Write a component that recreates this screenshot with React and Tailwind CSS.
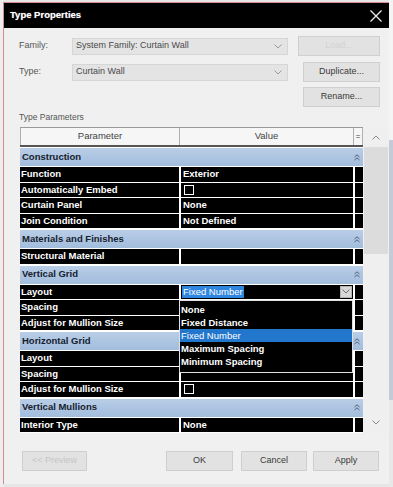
import React from 'react';

const groups = [
  {
    name: 'Construction',
    rows: [
      ['Function', 'Exterior'],
      ['Automatically Embed', 'check'],
      ['Curtain Panel', 'None'],
      ['Join Condition', 'Not Defined'],
    ],
  },
  { name: 'Materials and Finishes', rows: [['Structural Material', '']] },
  {
    name: 'Vertical Grid',
    rows: [
      ['Layout', 'dropdown'],
      ['Spacing', ''],
      ['Adjust for Mullion Size', 'check'],
    ],
  },
  {
    name: 'Horizontal Grid',
    rows: [
      ['Layout', ''],
      ['Spacing', ''],
      ['Adjust for Mullion Size', 'check'],
    ],
  },
  { name: 'Vertical Mullions', rows: [['Interior Type', 'None']] },
];

const layoutOptions = ['None', 'Fixed Distance', 'Fixed Number', 'Maximum Spacing', 'Minimum Spacing'];

function Chevron({ className = '' }) {
  return (
    <svg width="8" height="5" viewBox="0 0 8 5" className={className}>
      <path d="M0.5 0.5 L4 4 L7.5 0.5" fill="none" stroke="currentColor" strokeWidth="1" />
    </svg>
  );
}

function Collapse() {
  return (
    <svg width="6" height="7" viewBox="0 0 6 7" className="text-[#50607a]">
      <path d="M0.5 3 L3 0.8 L5.5 3 M0.5 6 L3 3.8 L5.5 6" fill="none" stroke="currentColor" strokeWidth="1" />
    </svg>
  );
}

function Checkbox() {
  return <div className="w-[10px] h-[10px] border border-white bg-black" />;
}

function Dropdown({ value }) {
  return (
    <div className="w-[216px] h-[17px] bg-[#e4e4e4] border border-[#d6d6d6] flex items-center pl-[3px] pr-[5px] text-[#4a4a4a]">
      <span className="flex-1">{value}</span>
      <Chevron className="text-[#9a9a9a]" />
    </div>
  );
}

function ValueCell({ value }) {
  if (value === 'check') {
    return (
      <div className="flex items-center h-full pl-[3px]">
        <Checkbox />
      </div>
    );
  }
  if (value === 'dropdown') {
    return (
      <div className="relative h-full flex items-center pl-[1px]">
        <span className="bg-[#2f86e0] text-white px-[1px] leading-[12px] font-normal">Fixed Number</span>
        <div className="ml-auto mr-[1px] w-[12px] h-[12px] bg-[#d8d8d8] border border-[#b5b5b5] flex items-center justify-center">
          <Chevron className="text-[#707070]" />
        </div>
        <div className="absolute z-10 left-[-2px] top-[15px] w-[174px] h-[73px] bg-black border border-[#e0e0e0] pt-[2px]">
          {layoutOptions.map((opt) => (
            <div
              key={opt}
              className={
                opt === 'Fixed Number'
                  ? 'h-[13px] leading-[13px] pl-[1px] bg-[#2277cc] text-white font-normal'
                  : 'h-[13px] leading-[13px] pl-[1px] text-white'
              }
            >
              {opt}
            </div>
          ))}
        </div>
      </div>
    );
  }
  return <div className="h-full flex items-center pl-[2px]">{value}</div>;
}

function ParamRow({ name, value }) {
  return (
    <div className="flex h-[15.5px] border-b border-white text-white font-bold text-[9.5px]">
      <div className="w-[159px] bg-black flex items-center pl-[1px] whitespace-nowrap">{name}</div>
      <div className="w-[2px] bg-white" />
      <div className="w-[172px] bg-black">
        <ValueCell value={value} />
      </div>
      <div className="w-[2px] bg-white" />
      <div className="w-[8px] bg-black" />
    </div>
  );
}

function GroupRow({ name }) {
  return (
    <div className="flex items-center h-[20px] border-t border-b border-white bg-gradient-to-b from-[#b9cde6] to-[#a2bddd] pl-[2px] pr-[3px]">
      <span className="flex-1 font-bold text-[9.5px] text-[#15202e]">{name}</span>
      <Collapse />
    </div>
  );
}

function Button({ children, className = '' }) {
  return (
    <div className={`h-[20px] bg-[#e2e2e2] border border-[#cfcfcf] flex items-center justify-center text-[#3a3a3a] ${className}`}>
      {children}
    </div>
  );
}

export default function App() {
  return (
    <div className="w-[393px] h-[487px] flex bg-[#e6e6e6] font-['Liberation_Sans',Arial,sans-serif] text-[9px] overflow-hidden">
      <div className="w-[3px] bg-[#eeeeee]" />
      <div className="w-[386px] h-[482px] mt-[2px] flex flex-col border-l border-t border-[#d98b93] bg-[#f0f0f0]">
        <div className="h-[25px] bg-black flex items-center pl-[6px] pr-[7px]">
          <span className="flex-1 text-white font-bold text-[9.5px] [text-shadow:0_0_1px_#999]">Type Properties</span>
          <svg width="12" height="12" viewBox="0 0 12 12">
            <path d="M0.5 0.5 L11.5 11.5 M11.5 0.5 L0.5 11.5" stroke="#f2f2f2" strokeWidth="1.2" />
          </svg>
        </div>

        <div className="flex-1 flex flex-col pl-[15px] pr-[1px] pt-[9px]">
          <div className="flex items-center h-[18px]">
            <span className="w-[53px] text-[#555]">Family:</span>
            <Dropdown value="System Family: Curtain Wall" />
            <Button className="ml-[10px] w-[82px] h-[18px] text-[#d2d2d2] bg-[#dedede]">Load...</Button>
          </div>
          <div className="flex items-center h-[18px] mt-[8px]">
            <span className="w-[53px] text-[#555]">Type:</span>
            <Dropdown value="Curtain Wall" />
            <Button className="ml-[15px] w-[77px] h-[19px]">Duplicate...</Button>
          </div>
          <div className="flex items-center h-[19px] mt-[6px] pl-[284px]">
            <Button className="w-[77px] h-[20px]">Rename...</Button>
          </div>

          <div className="mt-[5px] h-[12px] text-[#555] text-[8.5px]">Type Parameters</div>

          <div className="mt-[4px] ml-[1px] flex">
            <div className="w-[343px] flex flex-col">
              <div className="flex h-[20px] bg-[#f6f6f6] border-t border-[#9a9a9a] border-b-2 border-b-[#555] text-[#444] text-[9.5px]">
                <div className="w-[159px] flex items-center justify-center border-l border-[#b0b0b0]">Parameter</div>
                <div className="w-[174px] flex items-center justify-center border-l border-[#b0b0b0]">Value</div>
                <div className="flex-1 flex items-center justify-center border-l border-r border-[#b0b0b0] text-[8px]">=</div>
              </div>
              {groups.map((g) => (
                <React.Fragment key={g.name}>
                  <GroupRow name={g.name} />
                  {g.rows.map(([n, v], i) => (
                    <ParamRow key={g.name + i} name={n} value={v} />
                  ))}
                </React.Fragment>
              ))}
            </div>
            <div className="ml-[1px] w-[24px] flex flex-col bg-[#efefef]">
              <div className="h-[20px] flex items-center justify-center text-[#8a8a8a]">
                <Chevron className="rotate-180" />
              </div>
              <div className="h-[107px] bg-[#dcdcdc]" />
              <div className="flex-1" />
              <div className="h-[22px] flex items-center justify-center text-[#8a8a8a]">
                <Chevron />
              </div>
            </div>
          </div>

          <div className="flex items-center mt-[18px] pr-[9px]">
            <Button className="ml-[3px] w-[65px] bg-[#d9d9d9] text-[#c6c6c6]">&lt;&lt; Preview</Button>
            <Button className="ml-auto w-[67px]">OK</Button>
            <Button className="ml-[8px] w-[66px]">Cancel</Button>
            <Button className="ml-[6px] w-[66px]">Apply</Button>
          </div>
        </div>
      </div>
      <div className="flex-1 flex flex-col">
        <div className="h-[140px] bg-[#f4f4f4]" />
        <div className="h-[260px] bg-[#c4cad8]" />
        <div className="flex-1 bg-[#e8e8e8]" />
      </div>
    </div>
  );
}
